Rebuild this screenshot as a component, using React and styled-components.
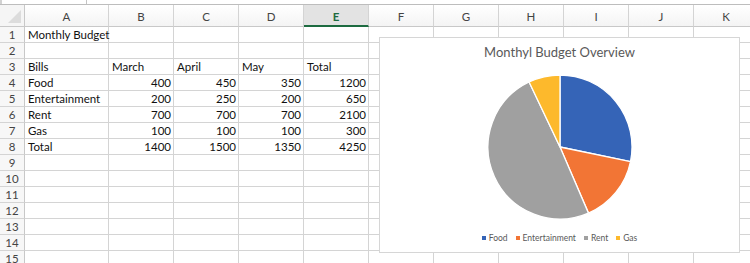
import styled, { createGlobalStyle } from "styled-components";

const GlobalStyle = createGlobalStyle`
  html, body {
    margin: 0;
    padding: 0;
    background: #fff;
    overflow: hidden;
  }
  body {
    font-family: "Lato", "Liberation Sans", sans-serif;
    color: #222;
  }
`;

const COLS = ["A", "B", "C", "D", "E", "F", "G", "H", "I", "J", "K"];
const ROW_COUNT = 15;

const cells = {
  1: { A: "Monthly Budget" },
  3: { A: "Bills", B: "March", C: "April", D: "May", E: "Total" },
  4: { A: "Food", B: 400, C: 450, D: 350, E: 1200 },
  5: { A: "Entertainment", B: 200, C: 250, D: 200, E: 650 },
  6: { A: "Rent", B: 700, C: 700, D: 700, E: 2100 },
  7: { A: "Gas", B: 100, C: 100, D: 100, E: 300 },
  8: { A: "Total", B: 1400, C: 1500, D: 1350, E: 4250 },
};

const slices = [
  { name: "Food", value: 1200, color: "#3564b7" },
  { name: "Entertainment", value: 650, color: "#f27535" },
  { name: "Rent", value: 2100, color: "#a0a0a0" },
  { name: "Gas", value: 300, color: "#fdb92c" },
];

const Page = styled.div`
  position: relative;
  width: 750px;
  height: 263px;
  overflow: hidden;
  box-shadow: inset 2px 0 0 #d2d2d2;
`;

const FormulaStrip = styled.div`
  height: 4px;
  border-bottom: 1px solid #bdbdbd;
  display: grid;
  grid-template-columns: 87px 1fr;
  span {
    border-right: 1px solid #c4c4c4;
  }
`;

const Sheet = styled.div`
  display: grid;
  grid-template-columns: 25px 84px repeat(10, 65px);
  grid-template-rows: 22px repeat(${ROW_COUNT}, 16px);
`;

const Corner = styled.div`
  position: relative;
  background: #f5f5f5;
  border-right: 1px solid #c8c8c8;
  border-bottom: 1px solid #c8c8c8;
  &::after {
    content: "";
    position: absolute;
    right: 3px;
    bottom: 3px;
    border-left: 13px solid transparent;
    border-bottom: 13px solid #dcdcdc;
  }
`;

const ColHead = styled.div`
  box-sizing: border-box;
  display: flex;
  align-items: center;
  justify-content: center;
  font-size: 11.5px;
  color: ${(p) => (p.$active ? "#1d6b40" : "#444")};
  font-weight: ${(p) => (p.$active ? 700 : 400)};
  background: ${(p) =>
    p.$active ? "#e3e3e3" : "linear-gradient(#ffffff, #f4f4f4)"};
  border-right: 1px solid #d4d4d4;
  border-bottom: ${(p) => (p.$active ? "2px solid #1d6b40" : "1px solid #c8c8c8")};
  padding-top: ${(p) => (p.$active ? "2px" : "1px")};
`;

const RowHead = styled.div`
  box-sizing: border-box;
  display: flex;
  align-items: flex-end;
  justify-content: center;
  padding-bottom: 1px;
  font-size: 11.5px;
  line-height: 12px;
  color: #444;
  background: #f7f7f7;
  border-right: 1px solid #c8c8c8;
  border-bottom: 1px solid #d4d4d4;
`;

const Cell = styled.div`
  box-sizing: border-box;
  display: flex;
  align-items: flex-end;
  justify-content: ${(p) => (p.$num ? "flex-end" : "flex-start")};
  padding: 0 2px 1px 3px;
  font-size: 11.5px;
  line-height: 12px;
  white-space: nowrap;
  color: #111;
  border-right: 1px solid #d4d4d4;
  border-bottom: 1px solid #d4d4d4;
`;

const ChartBox = styled.div`
  position: absolute;
  left: 379px;
  top: 37px;
  width: 361px;
  height: 216px;
  box-sizing: border-box;
  background: #fff;
  border: 1px solid #d6d6d6;
  display: flex;
  flex-direction: column;
  align-items: center;
`;

const ChartTitle = styled.div`
  margin-top: 6px;
  font-size: 13px;
  color: #595959;
  line-height: 16px;
`;

const PieArea = styled.div`
  margin-top: 13px;
  height: 148px;
`;

const Legend = styled.div`
  margin-top: 12px;
  display: flex;
  gap: 8px;
  font-size: 8.5px;
  color: #595959;
`;

const LegendItem = styled.div`
  display: flex;
  align-items: center;
  gap: 3px;
  &::before {
    content: "";
    width: 4px;
    height: 4px;
    background: ${(p) => p.$color};
  }
`;

function Pie() {
  const total = slices.reduce((s, x) => s + x.value, 0);
  const cx = 74;
  const cy = 74;
  const r = 72;
  let start = 0;
  const pt = (a) => [cx + r * Math.sin(a), cy - r * Math.cos(a)];
  return (
    <svg width="148" height="148" viewBox="0 0 148 148">
      {slices.map((s) => {
        const a0 = start;
        const a1 = start + (s.value / total) * Math.PI * 2;
        start = a1;
        const [x0, y0] = pt(a0);
        const [x1, y1] = pt(a1);
        const large = a1 - a0 > Math.PI ? 1 : 0;
        return (
          <path
            key={s.name}
            d={`M${cx},${cy} L${x0},${y0} A${r},${r} 0 ${large} 1 ${x1},${y1} Z`}
            fill={s.color}
            stroke="#fff"
            strokeWidth="1.3"
            strokeLinejoin="round"
          />
        );
      })}
    </svg>
  );
}

export default function App() {
  const rows = [];
  for (let r = 1; r <= ROW_COUNT; r++) rows.push(r);

  return (
    <>
      <GlobalStyle />
      <Page>
        <FormulaStrip>
          <span />
          <div />
        </FormulaStrip>
        <Sheet>
          <Corner />
          {COLS.map((c) => (
            <ColHead key={c} $active={c === "E"}>
              {c}
            </ColHead>
          ))}
          {rows.map((r) => [
            <RowHead key={`h${r}`}>{r}</RowHead>,
            ...COLS.map((c) => {
              const v = cells[r] && cells[r][c];
              return (
                <Cell key={`${c}${r}`} $num={typeof v === "number"}>
                  {v}
                </Cell>
              );
            }),
          ])}
        </Sheet>
        <ChartBox>
          <ChartTitle>Monthyl Budget Overview</ChartTitle>
          <PieArea>
            <Pie />
          </PieArea>
          <Legend>
            {slices.map((s) => (
              <LegendItem key={s.name} $color={s.color}>
                {s.name}
              </LegendItem>
            ))}
          </Legend>
        </ChartBox>
      </Page>
    </>
  );
}
